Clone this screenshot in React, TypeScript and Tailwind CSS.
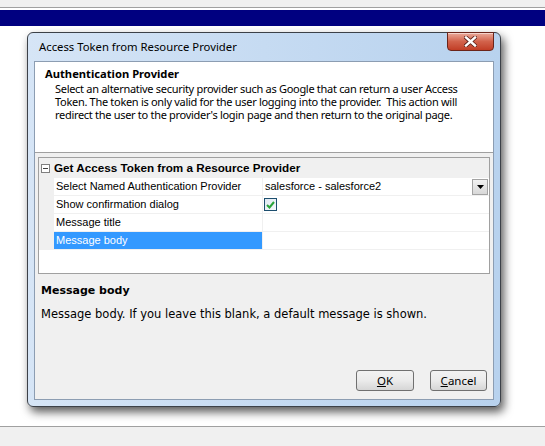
import React from "react";

const seg = { fontFamily: '"Noto Sans", "Open Sans", sans-serif' } as const;
const tah = { fontFamily: '"Liberation Sans", Arial, sans-serif' } as const;
const ver = { fontFamily: '"DejaVu Sans", Verdana, sans-serif' } as const;

function Row({
  label,
  selected,
  children,
}: {
  label: string;
  selected?: boolean;
  children?: React.ReactNode;
}) {
  return (
    <div className="flex h-[18px]">
      <div className="w-[15px] shrink-0 bg-[#f0f0f0]" />
      <div
        className={
          "flex w-[208px] shrink-0 items-center whitespace-nowrap border-b border-[#f0f0f0] pl-[2px] text-[11px] " +
          (selected ? "bg-[#3399ff] text-white" : "bg-white text-black")
        }
      >
        {label}
      </div>
      <div className="w-px shrink-0 bg-[#f0f0f0]" />
      <div className="flex flex-1 items-center border-b border-[#f0f0f0] bg-white">{children}</div>
    </div>
  );
}

export default function App() {
  return (
    <div className="flex h-[446px] w-[545px] flex-col overflow-hidden bg-white" style={seg}>
      <div className="h-[7px] shrink-0 bg-[#f0f0f0]" />
      <div className="h-px shrink-0 bg-[#a0a0a0]" />
      <div className="h-[2px] shrink-0 bg-white" />
      <div className="h-[16px] shrink-0 bg-[#000080]" />
      <div className="flex h-[400px] shrink-0 flex-col pl-[27px] pt-[6px]">
        {/* window */}
        <div className="relative flex h-[375px] w-[474px] flex-col rounded-[6px] border border-[#3c4148] bg-gradient-to-r from-[#d6e5f6] via-[#c6dbf2] to-[#b8d2ee] px-[6px] pb-[6px] shadow-[3px_5px_10px_rgba(0,0,0,0.65)]">
          {/* title bar */}
          <div className="flex h-[28px] shrink-0 items-center whitespace-nowrap pl-[5px] text-[11.3px] text-black">
            Access Token from Resource Provider
          </div>
          {/* close button */}
          <div className="absolute right-[6px] top-[-1px] flex h-[19px] w-[47px] items-center justify-center rounded-b-[4px] border border-[#6b2419] bg-gradient-to-b from-[#e9a99a] via-[#d2624b] to-[#c13d25] shadow-[inset_0_1px_0_rgba(255,255,255,0.5)]">
            <svg width="13" height="11" viewBox="0 0 13 11">
              <path
                d="M2 1.5 L11 9.5 M11 1.5 L2 9.5"
                stroke="#5a2018"
                strokeWidth="4"
                strokeLinecap="square"
              />
              <path
                d="M2 1.5 L11 9.5 M11 1.5 L2 9.5"
                stroke="#ffffff"
                strokeWidth="2.4"
                strokeLinecap="square"
              />
            </svg>
          </div>
          {/* content */}
          <div className="flex flex-1 flex-col border border-[#8c9db2] bg-[#f0f0f0]">
            {/* header panel */}
            <div className="h-[91px] shrink-0 whitespace-nowrap border-b border-[#a0a0a0] bg-white pl-[10px] pt-[4px]">
              <div className="text-[11.2px] font-bold leading-[16px] text-black">Authentication Provider</div>
              <div className="pl-[10px] text-[11px] leading-[13px] tracking-[-0.3px] text-black">
                <div>Select an alternative security provider such as Google that can return a user Access</div>
                <div>Token. The token is only valid for the user logging into the provider.&nbsp; This action will</div>
                <div>redirect the user to the provider's login page and then return to the original page.</div>
              </div>
            </div>
            {/* grid */}
            <div className="mx-[3px] mt-[4px] h-[117px] shrink-0 border border-[#a0a0a0] bg-white" style={tah}>
              <div className="flex h-[20px] items-center bg-[#f0f0f0]">
                <div className="ml-[2px] flex h-[9px] w-[9px] items-center justify-center border border-[#808080] bg-white">
                  <div className="h-px w-[5px] bg-[#404040]" />
                </div>
                <div className="ml-[4px] whitespace-nowrap text-[11.7px] font-bold text-black">
                  Get Access Token from a Resource Provider
                </div>
              </div>
              <Row label="Select Named Authentication Provider">
                <div className="flex flex-1 items-center justify-between pl-[2px] pr-[1px] text-[11px] text-black">
                  <span>salesforce - salesforce2</span>
                  <div className="flex h-[16px] w-[16px] items-center justify-center border border-[#a3a3a3] bg-gradient-to-b from-[#f2f2f2] to-[#d8d8d8]">
                    <svg width="7" height="4" viewBox="0 0 7 4">
                      <path d="M0 0 H7 L3.5 4 Z" fill="#000" />
                    </svg>
                  </div>
                </div>
              </Row>
              <Row label="Show confirmation dialog">
                <div className="ml-[1px] flex h-[13px] w-[13px] items-center justify-center border border-[#1c4e6e] bg-gradient-to-br from-[#dfe9f3] to-[#f6f9fc]">
                  <svg width="9" height="8" viewBox="0 0 9 8">
                    <path d="M1 4 L3.5 6.5 L8 1" stroke="#2aa43a" strokeWidth="2" fill="none" />
                  </svg>
                </div>
              </Row>
              <Row label="Message title" />
              <Row label="Message body" selected />
            </div>
            {/* help */}
            <div className="mt-[10px] whitespace-nowrap pl-[6px]" style={ver}>
              <div className="text-[11px] font-bold leading-[14px] text-black">Message body</div>
              <div className="mt-[9px] text-[11.5px] leading-[14px] text-black">
                Message body. If you leave this blank, a default message is shown.
              </div>
            </div>
            <div className="flex-1" />
            {/* buttons */}
            <div className="mb-[8px] flex justify-end gap-[16px] pr-[6px]">
              <div className="flex h-[21px] w-[58px] items-center justify-center rounded-[3px] border border-[#707070] bg-gradient-to-b from-[#f2f2f2] via-[#ebebeb] to-[#d6d6d6] text-[11.5px] text-black">
                <span>
                  <span className="underline">O</span>K
                </span>
              </div>
              <div className="flex h-[21px] w-[57px] items-center justify-center rounded-[3px] border border-[#707070] bg-gradient-to-b from-[#f2f2f2] via-[#ebebeb] to-[#d6d6d6] text-[11.5px] text-black">
                <span>
                  <span className="underline">C</span>ancel
                </span>
              </div>
            </div>
          </div>
        </div>
        <div className="flex-1" />
      </div>
      <div className="h-px shrink-0 bg-[#a0a0a0]" />
      <div className="flex-1 bg-[#f0f0f0]" />
    </div>
  );
}
